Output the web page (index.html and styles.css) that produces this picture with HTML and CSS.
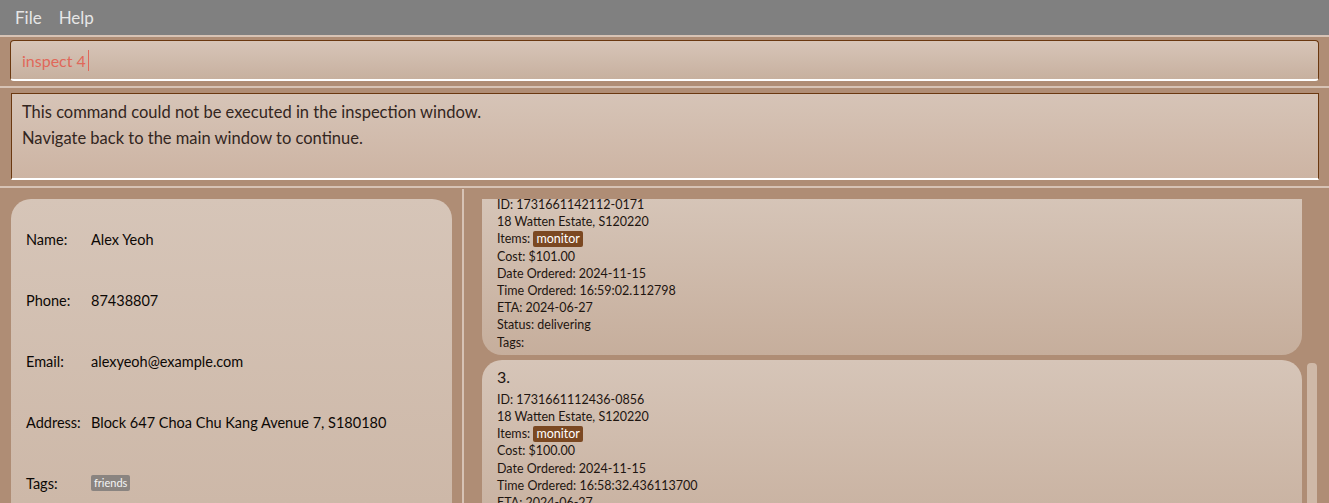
FILE: index.html
```html
<!DOCTYPE html>
<html>
<head>
<meta charset="utf-8">
<link rel="stylesheet" href="styles.css">
</head>
<body>
<div class="app">
  <div class="menubar">
    <span class="menu-item">File</span>
    <span class="menu-item">Help</span>
  </div>
  <div class="rule"></div>
  <div class="cmd-wrap">
    <div class="cmd-box"><span class="cmd-text">inspect 4</span><span class="caret"></span></div>
  </div>
  <div class="rule"></div>
  <div class="result-wrap">
    <div class="result-box">
      <div class="result-line">This command could not be executed in the inspection window.</div>
      <div class="result-line">Navigate back to the main window to continue.</div>
    </div>
  </div>
  <div class="rule"></div>
  <div class="split">
    <div class="left-pane">
      <div class="person-card">
        <div class="row"><span class="label">Name:</span><span class="value">Alex Yeoh</span></div>
        <div class="row"><span class="label">Phone:</span><span class="value">87438807</span></div>
        <div class="row"><span class="label">Email:</span><span class="value">alexyeoh@example.com</span></div>
        <div class="row"><span class="label">Address:</span><span class="value">Block 647 Choa Chu Kang Avenue 7, S180180</span></div>
        <div class="row"><span class="label">Tags:</span><span class="value"><span class="ptag">friends</span></span></div>
      </div>
    </div>
    <div class="divider"></div>
    <div class="right-pane">
      <div class="list">
        <div class="order-card first">
          <div class="line">ID: 1731661142112-0171</div>
          <div class="line">18 Watten Estate, S120220</div>
          <div class="line">Items: <span class="itag">monitor</span></div>
          <div class="line">Cost: $101.00</div>
          <div class="line">Date Ordered: 2024-11-15</div>
          <div class="line">Time Ordered: 16:59:02.112798</div>
          <div class="line">ETA: 2024-06-27</div>
          <div class="line">Status: delivering</div>
          <div class="line">Tags:</div>
        </div>
        <div class="order-card">
          <div class="num">3.</div>
          <div class="line">ID: 1731661112436-0856</div>
          <div class="line">18 Watten Estate, S120220</div>
          <div class="line">Items: <span class="itag">monitor</span></div>
          <div class="line">Cost: $100.00</div>
          <div class="line">Date Ordered: 2024-11-15</div>
          <div class="line">Time Ordered: 16:58:32.436113700</div>
          <div class="line">ETA: 2024-06-27</div>
          <div class="line">Status: delivering</div>
          <div class="line">Tags:</div>
        </div>
      </div>
      <div class="scrollbar"><div class="thumb"></div></div>
    </div>
  </div>
</div>
</body>
</html>
```
FILE: styles.css
```css
html, body {
  margin: 0;
  padding: 0;
  height: 100%;
  overflow: hidden;
}
body {
  background: #af8d75;
  font-family: "Lato", "Open Sans", sans-serif;
}
.app {
  display: flex;
  flex-direction: column;
  height: 503px;
}
.menubar {
  height: 35px;
  background: #808080;
  display: flex;
  align-items: center;
  gap: 17px;
  padding-left: 15px;
  box-sizing: border-box;
}
.menu-item {
  color: #e6e6e6;
  font-size: 17px;
}
.rule {
  height: 2px;
  background: #d7c3b5;
  flex: none;
}
.cmd-wrap {
  padding: 3px 10px 5px 10px;
}
.cmd-box {
  height: 41px;
  box-sizing: border-box;
  border: 1px solid #6a3810;
  border-bottom: 2px solid #ffffff;
  border-radius: 4px;
  background: linear-gradient(#d7c5b8, #c7b09f);
  display: flex;
  align-items: center;
  padding-left: 11px;
}
.cmd-text {
  color: #e0685a;
  font-size: 16px;
}
.caret {
  width: 1px;
  height: 21px;
  background: #e0685a;
  margin-left: 2px;
}
.result-wrap {
  padding: 5px 10px 6px 11px;
}
.result-box {
  height: 87px;
  box-sizing: border-box;
  border: 1px solid #6a3810;
  border-bottom: 2px solid #ffffff;
  background: linear-gradient(#d6c4b7, #cdb4a3);
  padding: 5px 10px;
}
.result-line {
  color: #33261e;
  font-size: 16.5px;
  line-height: 26px;
}
.split {
  flex: 1;
  display: flex;
  min-height: 0;
}
.left-pane {
  width: 462px;
  flex: none;
  padding: 11px 10px 0 11px;
  box-sizing: border-box;
}
.person-card {
  background: linear-gradient(#d6c5b8, #cdb8a8);
  border-radius: 20px 20px 0 0;
  height: 100%;
  padding: 32px 15px 0 15px;
  box-sizing: border-box;
}
.row {
  display: flex;
  height: 61px;
  align-items: flex-start;
  font-size: 14.5px;
  color: #0c0805;
}
.label {
  width: 65px;
  flex: none;
}
.ptag {
  display: inline-block;
  background: #8a8480;
  color: #f4f4f4;
  font-size: 11px;
  padding: 1px 3px;
  border-radius: 2px;
  line-height: 14px;
  position: relative;
  top: -2px;
}
.divider {
  width: 2px;
  flex: none;
  background: #d7c3b5;
  margin-top: 1px;
}
.right-pane {
  flex: 1;
  display: flex;
  padding: 11px 0 0 18px;
  min-width: 0;
}
.list {
  width: 820px;
  flex: none;
  display: flex;
  flex-direction: column;
  gap: 5px;
  overflow: hidden;
}
.order-card {
  background: linear-gradient(#d6c5b8, #c6ae9c);
  border-radius: 20px;
  padding: 6px 15px 6px 15px;
  color: #1e1510;
  font-size: 12.5px;
  flex: none;
}
.order-card.first {
  border-radius: 0 0 20px 20px;
  padding-top: 0;
  padding-bottom: 4px;
  margin-top: -3px;
}
.line {
  line-height: 17.2px;
}
.num {
  font-size: 16px;
  line-height: 22px;
  margin-bottom: 3px;
}
.itag {
  display: inline-block;
  background: #7b4822;
  color: #ffffff;
  padding: 0 3px;
  border-radius: 2px;
  line-height: 16px;
}
.scrollbar {
  width: 10px;
  margin-left: 5px;
  padding-top: 164px;
}
.thumb {
  height: 400px;
  background: #cfb9a8;
  border-radius: 4px;
}
```
